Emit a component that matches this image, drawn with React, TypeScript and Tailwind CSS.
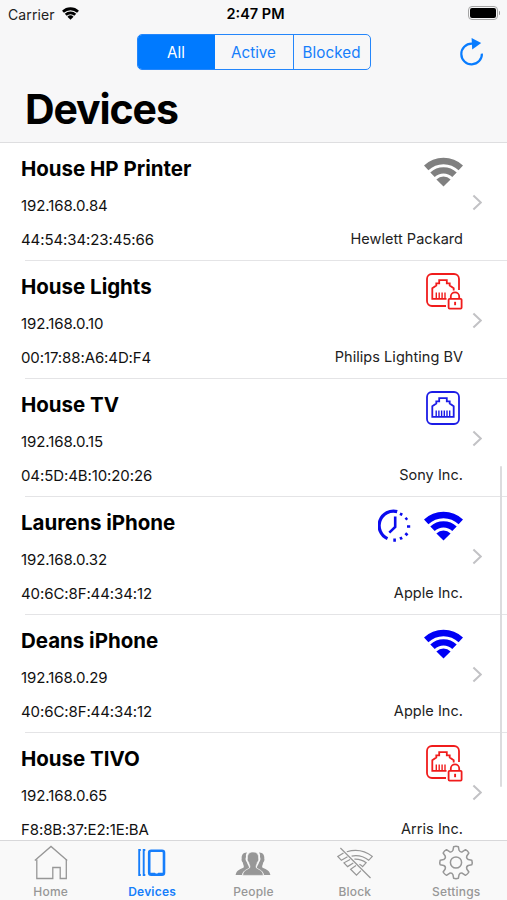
import type { ReactNode } from "react";

type DeviceIcon = "wifi-idle" | "wifi" | "wired" | "wired-locked";

type Device = {
  name: string;
  ip: string;
  mac: string;
  vendor: string;
  icon: DeviceIcon;
  scheduled?: boolean;
};

const devices: Device[] = [
  {
    name: "House HP Printer",
    ip: "192.168.0.84",
    mac: "44:54:34:23:45:66",
    vendor: "Hewlett Packard",
    icon: "wifi-idle",
  },
  {
    name: "House Lights",
    ip: "192.168.0.10",
    mac: "00:17:88:A6:4D:F4",
    vendor: "Philips Lighting BV",
    icon: "wired-locked",
  },
  {
    name: "House TV",
    ip: "192.168.0.15",
    mac: "04:5D:4B:10:20:26",
    vendor: "Sony Inc.",
    icon: "wired",
  },
  {
    name: "Laurens iPhone",
    ip: "192.168.0.32",
    mac: "40:6C:8F:44:34:12",
    vendor: "Apple Inc.",
    icon: "wifi",
    scheduled: true,
  },
  {
    name: "Deans iPhone",
    ip: "192.168.0.29",
    mac: "40:6C:8F:44:34:12",
    vendor: "Apple Inc.",
    icon: "wifi",
  },
  {
    name: "House TIVO",
    ip: "192.168.0.65",
    mac: "F8:8B:37:E2:1E:BA",
    vendor: "Arris Inc.",
    icon: "wired-locked",
  },
];

function WifiIcon({ className }: { className: string }) {
  return (
    <svg viewBox="0 0 39 30" className={className} fill="none">
      <path
        d="M2.2 10.9A25.2 25.2 0 0 1 36.8 10.9M8.5 17.8A15.9 15.9 0 0 1 30.5 17.8"
        stroke="currentColor"
        strokeWidth="6.4"
      />
      <path
        d="M19.5 29.6L12.4 22.4A10.2 10.2 0 0 1 26.6 22.4Z"
        fill="currentColor"
      />
    </svg>
  );
}

function EthernetIcon({ locked = false }: { locked?: boolean }) {
  return (
    <svg
      viewBox="0 0 38 38"
      className={
        locked
          ? "-mr-px size-[38px] text-[#f01c1c]"
          : "-mr-px size-[38px] text-[#1c1ce6]"
      }
      fill="none"
      stroke="currentColor"
      strokeWidth="1.8"
    >
      {locked ? (
        <path d="M33 17V6A5 5 0 0 0 28 1H6A5 5 0 0 0 1 6V28A5 5 0 0 0 6 33H20" />
      ) : (
        <rect x="1" y="1" width="32" height="32" rx="5" />
      )}
      <path
        d={
          locked
            ? "M20.5 25.8H6.3V15.3L10.3 12.6V10.4H13.2V7.2H20.8V10.4H23.7V12.6L27.7 15.3V17.5"
            : "M6.3 25.8V15.3L10.3 12.6V10.4H13.2V7.2H20.8V10.4H23.7V12.6L27.7 15.3V25.8Z"
        }
      />
      <path
        d={
          locked
            ? "M10.3 19.5V26M13.2 19.5V26M16.1 19.5V26M19 19.5V26"
            : "M10.2 19.5V26M12.9 19.5V26M15.6 19.5V26M18.3 19.5V26M21 19.5V26M23.7 19.5V26"
        }
        strokeWidth="1.4"
      />
      {locked && (
        <>
          <rect x="22.6" y="25.8" width="13" height="9.8" rx="1" />
          <path d="M24.8 25.6V23.6A4.2 4.2 0 0 1 33.2 23.6V25.6" />
          <path d="M29.1 28.8V32.2" strokeWidth="1.9" />
        </>
      )}
    </svg>
  );
}

function ScheduleIcon() {
  return (
    <svg
      viewBox="0 0 34 34"
      className="size-[34px] text-[#0b0bee]"
      fill="none"
      stroke="currentColor"
    >
      <path d="M19.2 2.6A14.4 14.4 0 0 0 9.5 29.6" strokeWidth="3.2" />
      <path d="M17.2 7.5V18L11.3 23.6" strokeWidth="2.6" />
      <path
        d="M22.6 6.4L23.7 3.9M27.4 10.6L29.3 9M29 17.5H32.2M27.3 24.2L29.6 26.2M22.4 28L23.7 30.5M16.6 29.4V32.8"
        strokeWidth="2.6"
      />
    </svg>
  );
}

function DeviceStatusIcon({ icon }: { icon: DeviceIcon }) {
  if (icon === "wired" || icon === "wired-locked") {
    return <EthernetIcon locked={icon === "wired-locked"} />;
  }
  return (
    <WifiIcon
      className={
        icon === "wifi"
          ? "mt-0.5 h-[30px] w-[39px] text-[#0000f5]"
          : "mt-0.5 h-[30px] w-[39px] text-[#808080]"
      }
    />
  );
}

function StatusBar() {
  return (
    <div className="flex h-7 items-center justify-between pr-[7px] pl-2 text-[14px]">
      <div className="flex w-40 items-center gap-[7px] text-[#222]">
        <span className="tracking-[0.1px]">Carrier</span>
        <WifiIcon className="mb-0.5 h-[13px] w-[17px] text-black" />
      </div>
      <span className="pl-[3px] text-[14.5px] font-semibold">2:47 PM</span>
      <div className="flex w-40 items-center justify-end gap-px pb-0.5">
        <div className="h-[14px] w-[30px] rounded-[4px] border-[1.5px] border-[#a5a5a5] p-px">
          <div className="h-full rounded-[2px] bg-black" />
        </div>
        <div className="h-1 w-[1.5px] rounded-r bg-[#999]" />
      </div>
    </div>
  );
}

function FilterControl() {
  return (
    <div className="flex h-9 w-[234px] overflow-hidden rounded-[5px] border border-[#2486fb] text-[15.2px] text-[#167efb]">
      <button className="w-[77px] bg-[#007aff] pt-0.5 text-white">All</button>
      <button className="w-[79px] border-r border-[#2486fb] pt-0.5">
        Active
      </button>
      <button className="flex-1 pt-0.5 tracking-[0.1px]">Blocked</button>
    </div>
  );
}

function DeviceRow({ device }: { device: Device }) {
  return (
    <li className="flex h-[118px] shrink-0 flex-col">
      <div className="flex flex-1 pr-[25px] pl-[21px]">
        <div className="flex flex-1 flex-col pt-[11px] text-[15px] tracking-[-0.1px] text-[#111]">
          <h2 className="text-[20.5px] leading-[30px] font-bold tracking-[-0.02px] text-black">
            {device.name}
          </h2>
          <p className="mt-3 leading-5">{device.ip}</p>
          <p className="mt-3.5 leading-5">{device.mac}</p>
        </div>
        <div className="flex flex-col items-end pt-3">
          <div className="flex h-[38px] items-start gap-3">
            {device.scheduled && <ScheduleIcon />}
            <DeviceStatusIcon icon={device.icon} />
          </div>
          <p className="mt-9 text-[14.5px] leading-5 tracking-[0.04px] text-[#222]">
            {device.vendor}
          </p>
        </div>
        <div className="flex w-[19px] justify-end pt-[51px]">
          <svg
            viewBox="0 0 10 17"
            className="h-[17px] w-2.5"
            fill="none"
            stroke="#c2c2c5"
            strokeWidth="2"
          >
            <path d="M1.4 1.5L8.8 8.5L1.4 15.5" />
          </svg>
        </div>
      </div>
      <div className="ml-[25px] h-px bg-[#e4e4e6]" />
    </li>
  );
}

// Closed outline with eight tapered teeth around a 34px box.
function gearOutline() {
  const point = (radius: number, degrees: number) => {
    const angle = ((degrees - 90) * Math.PI) / 180;
    return `${(17 + radius * Math.cos(angle)).toFixed(2)} ${(17 + radius * Math.sin(angle)).toFixed(2)}`;
  };
  const teeth = Array.from({ length: 8 }, (_, i) => {
    const a = i * 45;
    return `${point(12.6, a - 14)}L${point(16, a - 8.5)}Q${point(16.6, a)} ${point(16, a + 8.5)}L${point(12.6, a + 14)}Q${point(10.8, a + 22.5)} `;
  });
  return `M${teeth.join("")}${point(12.6, -14)}Z`;
}

const tabs: { label: string; active?: boolean; icon: ReactNode }[] = [
  {
    label: "Home",
    icon: (
      <g strokeWidth="1.3">
        <path d="M1.8 16.6L18 2.4L34.2 16.6" />
        <path d="M3.8 15.5V34.5H19.8V23.5H27.2V34.5H33.3V15.5" />
      </g>
    ),
  },
  {
    label: "Devices",
    active: true,
    icon: (
      <>
        <path d="M6.8 6H5.2V31H6.8M11.3 6H9.7V31H11.3" strokeWidth="1.9" />
        <rect
          x="15.2"
          y="6.7"
          width="14.8"
          height="24"
          rx="2"
          strokeWidth="2.6"
        />
        <path d="M16 29.7H20.5L21.5 31H23.7L24.7 29.7H30" strokeWidth="2" />
      </>
    ),
  },
  {
    label: "People",
    icon: (
      <g fill="currentColor" stroke="none">
        <path d="M11.6 8.4C8 8.5 6.4 11 6.7 14.4C6.2 16 6.9 17.7 7.8 18.4C8.2 21 9.2 21.7 8.7 23.6C6.5 25.3 1.8 25.2.6 31H7C7.8 27 10.5 26 13.9 24.4C14.6 22 12.4 20.8 12 18.4C10.5 16.8 10.2 14.6 11 13C10.8 11 11 9.7 12 8.5Z" />
        <path d="M24.4 8.4C28 8.5 29.6 11 29.3 14.4C29.8 16 29.1 17.7 28.2 18.4C27.8 21 26.8 21.7 27.3 23.6C29.5 25.3 34.2 25.2 35.4 31H29C28.2 27 25.5 26 22.1 24.4C21.4 22 23.6 20.8 24 18.4C25.5 16.8 25.8 14.6 25 13C25.2 11 25 9.7 24 8.5Z" />
        <path
          d="M18 8C14 8 12.1 10.6 12.5 14.2C12 15.8 12.7 17.4 13.6 18.2C14 20.5 15.2 21.3 14.9 23.5C13 25.7 8.2 25.5 7.7 31.4H28.3C27.8 25.5 23 25.7 21.1 23.5C20.8 21.3 22 20.5 22.4 18.2C23.3 17.4 24 15.8 23.5 14.2C23.9 10.6 22 8 18 8Z"
          stroke="#f9f9f9"
          strokeWidth=".6"
        />
      </g>
    ),
  },
  {
    label: "Block",
    icon: (
      <g strokeWidth="1.2">
        <path d="M3.4 4L33.5 34" />
        <path d="M9.8 7.8A28 28 0 0 1 35.3 12.4L31.7 16.3A21.5 21.5 0 0 0 14.6 12.1" />
        <path d="M6.5 8.9L.8 12.5L4.4 16.3L10.5 12.8" />
        <path d="M17.4 15.1A18 18 0 0 1 29.2 18.7L25.6 22.6A13 13 0 0 0 22.4 20.3" />
        <path d="M13.1 15.5L7 18.8L10.6 22.6L16.3 18.9" />
        <path d="M19 21.4L13.6 25.3L19.5 31.1L23.9 26.6" />
      </g>
    ),
  },
  {
    label: "Settings",
    icon: (
      <g strokeWidth="1.5" transform="translate(1 1.5)">
        <path d={gearOutline()} strokeLinejoin="round" />
        <circle cx="17" cy="17" r="5.6" />
      </g>
    ),
  },
];

function TabBar() {
  return (
    <nav className="grid h-[60px] shrink-0 grid-cols-5 border-t border-[#d8d8da] bg-[#f9f9f9]">
      {tabs.map((tab) => (
        <button
          key={tab.label}
          className={`flex flex-col items-center pt-[3px] text-[12px] leading-4 tracking-[0.2px] ${tab.active ? "font-semibold text-[#167efb]" : "font-medium text-[#979797]"}`}
        >
          <svg
            viewBox="0 0 36 36"
            className="size-9"
            fill="none"
            stroke="currentColor"
          >
            {tab.icon}
          </svg>
          <span className="mt-1">{tab.label}</span>
        </button>
      ))}
    </nav>
  );
}

export default function App() {
  return (
    <div className="relative flex h-[900px] w-[507px] flex-col overflow-hidden bg-white font-['Inter','Liberation_Sans',sans-serif] text-black">
      <header className="h-[143px] shrink-0 border-b border-[#dedee0] bg-[#f7f7f8]">
        <StatusBar />
        <div className="grid grid-cols-[1fr_234px_1fr] items-center pt-1.5">
          <div />
          <FilterControl />
          <div className="flex justify-end pr-[22px]">
            <svg
              viewBox="0 0 26 30"
              className="h-[30px] w-[26px] text-[#087cff]"
              fill="none"
            >
              <path
                d="M22.9 16.6A10.3 10.3 0 1 1 12.6 6.7H15"
                stroke="currentColor"
                strokeWidth="2.2"
              />
              <path d="M12.6 1L22.2 6.1L13.2 12.4Z" fill="currentColor" />
            </svg>
          </div>
        </div>
        <h1 className="mt-3.5 pl-[25px] text-[41px] leading-[50px] font-bold tracking-[-1.1px]">
          Devices
        </h1>
      </header>
      <main className="min-h-0 flex-1 overflow-hidden">
        <ul className="flex flex-col">
          {devices.map((device) => (
            <DeviceRow key={device.name} device={device} />
          ))}
        </ul>
      </main>
      <TabBar />
      <div className="absolute top-[466px] right-[5px] h-[321px] w-[2px] rounded-full bg-[#dcdcde]" />
    </div>
  );
}
